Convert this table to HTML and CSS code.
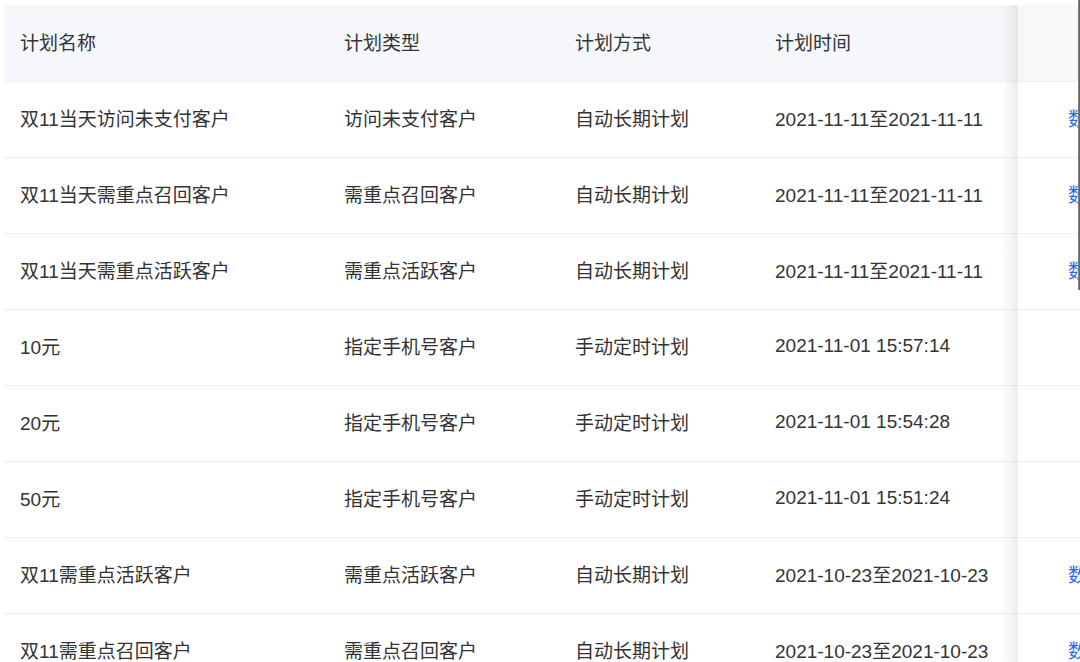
FILE: index.html
```html
<!DOCTYPE html>
<html lang="zh-CN">
<head>
<meta charset="utf-8">
<link rel="stylesheet" href="styles.css">
</head>
<body>
<div class="wrap">
  <table class="plans">
    <colgroup>
      <col class="c1"><col class="c2"><col class="c3"><col class="c4"><col class="c5">
    </colgroup>
    <thead>
      <tr><th>计划名称</th><th>计划类型</th><th>计划方式</th><th>计划时间</th><th class="fixed"></th></tr>
    </thead>
    <tbody>
      <tr><td>双11当天访问未支付客户</td><td>访问未支付客户</td><td>自动长期计划</td><td>2021-11-11至2021-11-11</td><td class="fixed"><a class="link">数据</a></td></tr>
      <tr><td>双11当天需重点召回客户</td><td>需重点召回客户</td><td>自动长期计划</td><td>2021-11-11至2021-11-11</td><td class="fixed"><a class="link">数据</a></td></tr>
      <tr><td>双11当天需重点活跃客户</td><td>需重点活跃客户</td><td>自动长期计划</td><td>2021-11-11至2021-11-11</td><td class="fixed"><a class="link">数据</a></td></tr>
      <tr><td>10元</td><td>指定手机号客户</td><td>手动定时计划</td><td>2021-11-01 15:57:14</td><td class="fixed"></td></tr>
      <tr><td>20元</td><td>指定手机号客户</td><td>手动定时计划</td><td>2021-11-01 15:54:28</td><td class="fixed"></td></tr>
      <tr><td>50元</td><td>指定手机号客户</td><td>手动定时计划</td><td>2021-11-01 15:51:24</td><td class="fixed"></td></tr>
      <tr><td>双11需重点活跃客户</td><td>需重点活跃客户</td><td>自动长期计划</td><td>2021-10-23至2021-10-23</td><td class="fixed"><a class="link">数据</a></td></tr>
      <tr><td>双11需重点召回客户</td><td>需重点召回客户</td><td>自动长期计划</td><td>2021-10-23至2021-10-23</td><td class="fixed"><a class="link">数据</a></td></tr>
    </tbody>
  </table>
</div>
<div class="edge"></div>
</body>
</html>
```
FILE: styles.css
```css
html, body {
  margin: 0;
  padding: 0;
  background: #fff;
  overflow: hidden;
  width: 1080px;
  height: 662px;
}
body {
  position: relative;
  font-family: "Liberation Sans", "Noto Sans CJK SC", sans-serif;
  font-size: 19px;
  color: #333;
}
.wrap {
  padding: 5px 0 0 4px;
  width: 1300px;
}
.plans {
  border-collapse: collapse;
  table-layout: fixed;
  width: 1214px;
}
.c1 { width: 324px; }
.c2 { width: 231px; }
.c3 { width: 200px; }
.c4 { width: 259px; }
.c5 { width: 200px; }
.plans th,
.plans td {
  height: 71px;
  padding: 0 16px 4px;
  text-align: left;
  font-weight: normal;
  white-space: nowrap;
  border-bottom: 1px solid #ebeef5;
  vertical-align: middle;
}
.plans th {
  height: 72px;
  background: #f5f7fa;
  color: #333;
}
.plans td {
  background: #fff;
}
.plans .fixed {
  position: relative;
  padding-left: 50px;
}
.plans .fixed::before {
  content: "";
  position: absolute;
  top: 0;
  bottom: -1px;
  left: -16px;
  width: 16px;
  background: linear-gradient(to left, rgba(0, 0, 0, 0.075), rgba(0, 0, 0, 0));
  pointer-events: none;
}
.plans th.fixed {
  background: #f7f8fa;
}
.link {
  color: #2d6be6;
}
.edge {
  position: absolute;
  top: 0;
  right: 0;
  width: 2px;
  height: 290px;
  background: linear-gradient(to right, #8a8a8a, #5a5a5a);
}
```
